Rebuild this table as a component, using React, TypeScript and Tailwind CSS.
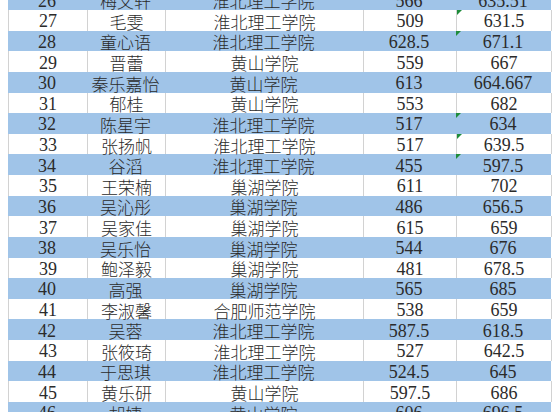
import React from "react";

type Row = {
  no: number;
  name: string;
  school: string;
  first: string;
  second: string;
  flag?: boolean; // green "number stored as text" marker
};

const rows: Row[] = [
  { no: 26, name: "梅文轩", school: "淮北理工学院", first: "566", second: "635.51" },
  { no: 27, name: "毛雯", school: "淮北理工学院", first: "509", second: "631.5", flag: true },
  { no: 28, name: "童心语", school: "淮北理工学院", first: "628.5", second: "671.1", flag: true },
  { no: 29, name: "晋蕾", school: "黄山学院", first: "559", second: "667" },
  { no: 30, name: "秦乐嘉怡", school: "黄山学院", first: "613", second: "664.667" },
  { no: 31, name: "郁桂", school: "黄山学院", first: "553", second: "682" },
  { no: 32, name: "陈星宇", school: "淮北理工学院", first: "517", second: "634", flag: true },
  { no: 33, name: "张扬帆", school: "淮北理工学院", first: "517", second: "639.5", flag: true },
  { no: 34, name: "谷滔", school: "淮北理工学院", first: "455", second: "597.5", flag: true },
  { no: 35, name: "王荣楠", school: "巢湖学院", first: "611", second: "702" },
  { no: 36, name: "吴沁彤", school: "巢湖学院", first: "486", second: "656.5" },
  { no: 37, name: "吴家佳", school: "巢湖学院", first: "615", second: "659" },
  { no: 38, name: "吴乐怡", school: "巢湖学院", first: "544", second: "676" },
  { no: 39, name: "鲍泽毅", school: "巢湖学院", first: "481", second: "678.5" },
  { no: 40, name: "高强", school: "巢湖学院", first: "565", second: "685" },
  { no: 41, name: "李淑馨", school: "合肥师范学院", first: "538", second: "659" },
  { no: 42, name: "吴蓉", school: "淮北理工学院", first: "587.5", second: "618.5" },
  { no: 43, name: "张筱琦", school: "淮北理工学院", first: "527", second: "642.5" },
  { no: 44, name: "于思琪", school: "淮北理工学院", first: "524.5", second: "645" },
  { no: 45, name: "黄乐研", school: "黄山学院", first: "597.5", second: "686" },
  { no: 46, name: "胡婕", school: "黄山学院", first: "606", second: "696.5" },
];

const num = "font-['Liberation_Serif',serif] text-[18px]";
const cjk = "font-['Noto_Sans_CJK_SC',sans-serif] font-light text-[17px]";

function Cell({ children, className = "", blue }: { children: React.ReactNode; className?: string; blue: boolean }) {
  return (
    <div
      className={`relative flex items-center justify-center pt-[2px] ${
        blue ? "border-r border-[#a0c4e8]" : "border-r border-[#d2d2d2]"
      } ${className}`}
    >
      {children}
    </div>
  );
}

export default function App() {
  return (
    <div className="w-[560px] h-[412px] overflow-hidden bg-white text-[#2b2b2b]">
      <div className="mt-[-10.6px] ml-[8px] w-[543px]">
        {rows.map((r) => {
          const blue = r.no % 2 === 0;
          return (
            <div
              key={r.no}
              className={`grid grid-cols-[79px_78px_198px_93px_95px] h-[20.63px] leading-none ${
                blue ? "bg-[#a0c4e8]" : "bg-white border-l border-[#d2d2d2]"
              }`}
            >
              <Cell blue={blue} className={num}>{r.no}</Cell>
              <Cell blue={blue} className={cjk}>{r.name}</Cell>
              <Cell blue={blue} className={cjk}>{r.school}</Cell>
              <Cell blue={blue} className={num}>{r.first}</Cell>
              <Cell blue={blue} className={num}>
                {r.flag && (
                  <span className="absolute left-0 top-0 w-0 h-0 border-t-[5px] border-r-[5px] border-t-[#1e8c3a] border-r-transparent" />
                )}
                {r.second}
              </Cell>
            </div>
          );
        })}
      </div>
    </div>
  );
}
